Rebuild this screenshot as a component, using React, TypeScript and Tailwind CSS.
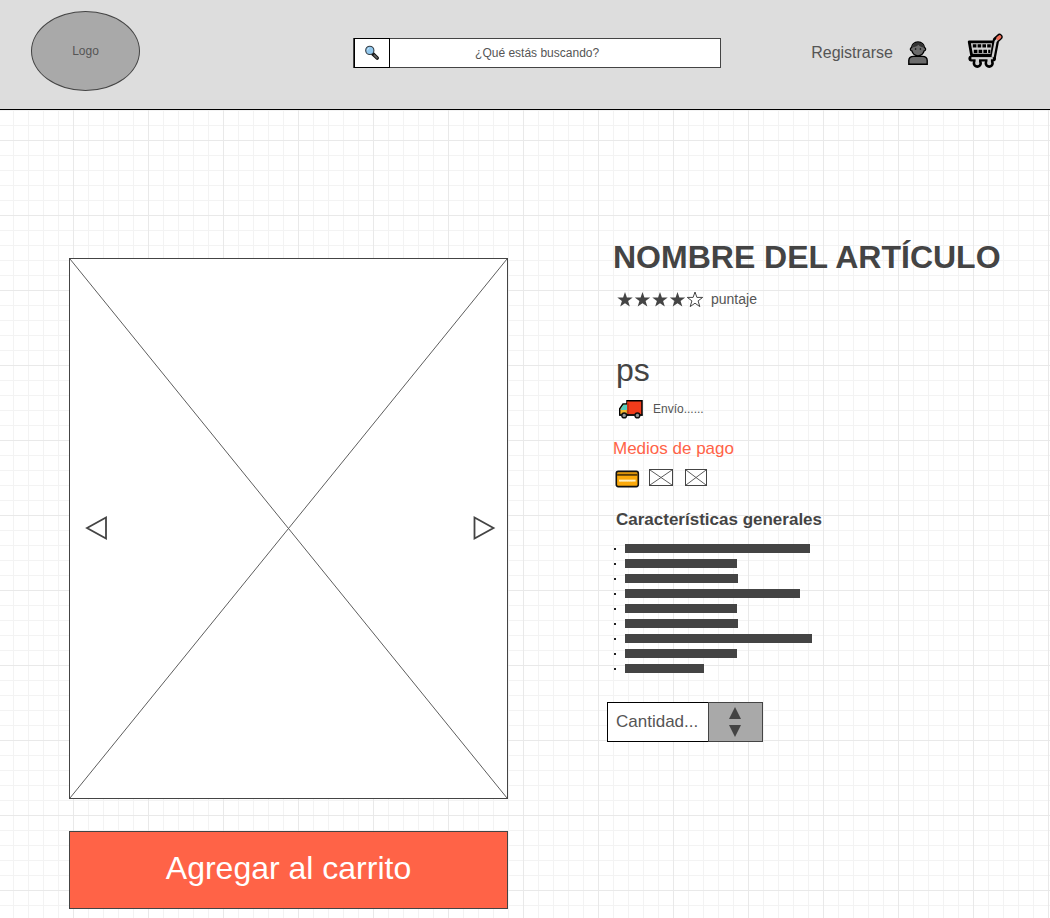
import React from "react";

const featureBars = [
  "w-[185px]",
  "w-[112px]",
  "w-[113px]",
  "w-[175px]",
  "w-[112px]",
  "w-[113px]",
  "w-[187px]",
  "w-[112px]",
  "w-[79px]",
];

function SearchIcon() {
  return (
    <svg viewBox="0 0 16 16" className="h-4 w-4" aria-hidden="true">
      <path d="M8.6 8.6 L13.2 13" stroke="#111" strokeWidth="3.6" strokeLinecap="round" />
      <path d="M10.2 10.2 L13 12.8" stroke="#666" strokeWidth="1.6" strokeLinecap="round" />
      <circle cx="5.8" cy="5.4" r="4.1" fill="#92c8ee" stroke="#333b42" strokeWidth="1.1" />
      <path d="M3.4 5.4 A2.6 2.6 0 0 1 5.4 3" fill="none" stroke="#c5e4fa" strokeWidth="1" />
    </svg>
  );
}

function UserIcon() {
  return (
    <svg viewBox="0 0 22 26" className="h-[26px] w-[22px]" aria-hidden="true">
      <path d="M1.8 24.2 V20.6 Q1.8 16.4 6.6 16.4 H15.4 Q20.2 16.4 20.2 20.6 V24.2 Z" fill="#6b6b6b" stroke="#000" strokeWidth="1.4" />
      <path d="M11 2 C7.2 2 4.6 4.5 4.6 7.6 C2.8 8 3 10.4 4.8 10.8 C5.8 14 8.3 15.8 11 15.8 C13.7 15.8 16.2 14 17.2 10.8 C19 10.4 19.2 8 17.4 7.6 C17.4 4.5 14.8 2 11 2 Z" fill="#6b6b6b" stroke="#000" strokeWidth="1.3" />
      <path d="M5.2 7.4 C5.2 4 8 2.4 11 2.4 C14 2.4 16.8 4 16.8 7.4 C14 7 12.4 6.2 11.4 4.8 C10 6.4 8.2 7.2 5.2 7.4 Z" fill="#333" />
      <circle cx="8.6" cy="9" r="0.8" />
      <circle cx="13.4" cy="9" r="0.8" />
    </svg>
  );
}

function CartIcon() {
  return (
    <svg viewBox="0 0 36 36" className="h-9 w-9" fill="none" aria-hidden="true">
      <path d="M25.8 24 L29 7.2 L32.4 4" stroke="#000" strokeWidth="6.4" strokeLinecap="round" strokeLinejoin="round" />
      <path d="M4.4 25.4 H26" stroke="#000" strokeWidth="6" strokeLinecap="round" />
      <circle cx="10.3" cy="30.2" r="3.4" fill="#d0d0d0" stroke="#000" strokeWidth="2.6" />
      <circle cx="22.2" cy="30.2" r="3.4" fill="#d0d0d0" stroke="#000" strokeWidth="2.6" />
      <path d="M2.2 8.8 H26.6 L24.8 22.2 H4.6 Z" fill="#d0d0d0" stroke="#000" strokeWidth="2.8" strokeLinejoin="round" />
      <path d="M5.8 12.9 H24 M6.8 18.3 H23.4" stroke="#000" strokeWidth="3.2" strokeDasharray="3.6 1.2" />
      <path d="M25.6 24 L28.6 8.4 L30.2 6.6" stroke="#d0d0d0" strokeWidth="2.2" />
      <path d="M4.4 25.2 H25.8" stroke="#d0d0d0" strokeWidth="2.2" />
      <path d="M8.6 26 H12 V30 H8.6 Z M20.5 26 H23.9 V30 H20.5 Z" fill="#d0d0d0" />
      <path d="M31 5.4 L32.6 4" stroke="#f0705b" strokeWidth="3.6" strokeLinecap="round" />
    </svg>
  );
}

function TruckIcon() {
  return (
    <svg viewBox="0 0 26 20" className="h-5 w-[26px]" aria-hidden="true">
      <path d="M9 1.7 H24 V16 H9 Z" fill="#f23c1b" stroke="#000" strokeWidth="1.5" />
      <path d="M9.6 5 H5 L1.7 9.8 V16 H9.6 Z" fill="#f5b92e" stroke="#000" strokeWidth="1.4" />
      <path d="M9.2 5.8 H5.5 L2.8 9.8 V11 H9.2 Z" fill="#55cbbd" />
      <path d="M9.8 2.6 V15" stroke="#f23c1b" strokeWidth="1.2" />
      <path d="M1.4 15.4 H24.6 V16.8 H1.4 Z" fill="#111" />
      <circle cx="6.2" cy="16.4" r="2.4" fill="#999" stroke="#111" strokeWidth="1.4" />
      <circle cx="19.4" cy="16.4" r="2.4" fill="#999" stroke="#111" strokeWidth="1.4" />
    </svg>
  );
}

function CardIcon() {
  return (
    <svg viewBox="0 0 26 18" className="h-[18px] w-[26px]" role="img" aria-label="Tarjeta">
      <rect x="2.3" y="1.4" width="22" height="15.2" rx="2" fill="#fba90a" stroke="#111" strokeWidth="1.6" />
      <path d="M3.1 4.8 H23.5" stroke="#5b3c05" strokeWidth="2" />
      <path d="M5 10.6 H21.6" stroke="#fff0c2" strokeWidth="1.9" />
      <path d="M6 11.4 H19" stroke="#f9d98d" strokeWidth="0.8" strokeDasharray="1.4 0.8" />
    </svg>
  );
}

function CrossLines() {
  return (
    <svg viewBox="0 0 100 100" preserveAspectRatio="none" className="block h-full w-full" aria-hidden="true">
      <path d="M0 0 L100 100 M100 0 L0 100" stroke="#5c5c5c" strokeWidth="1" vectorEffect="non-scaling-stroke" fill="none" />
    </svg>
  );
}

function Stars() {
  const star = "M8 0.4 L9.9 5.8 H15.7 L11.1 9.3 L12.8 15 L8 11.6 L3.2 15 L4.9 9.3 L0.3 5.8 H6.1 Z";
  return (
    <svg viewBox="0 0 88 16" className="h-4 w-[88px]" role="img" aria-label="4 de 5 estrellas">
      {[0, 17.5, 35, 52.5, 70].map((x, i) => (
        <path
          key={x}
          d={star}
          transform={`translate(${x} 0.6)`}
          fill={i < 4 ? "#444" : "#fff"}
          stroke="#444"
          strokeWidth={i < 4 ? 0 : 1}
        />
      ))}
    </svg>
  );
}

function Header() {
  return (
    <header className="grid h-[110px] grid-cols-[109px_213fr_368px_90fr_auto] border-b border-black bg-[#ddd] pr-[47px] pl-[31px]">
      <a
        href="#inicio"
        className="mt-[11px] flex h-20 items-center justify-center rounded-[50%] border border-[#444] bg-[#a9a9a9] text-[12px]"
      >
        Logo
      </a>
      <form role="search" className="col-start-3 mt-[38px] flex h-[30px] border border-[#444] bg-white">
        <button
          type="button"
          aria-label="Buscar"
          className="-my-px flex w-9 items-center justify-center border border-black"
        >
          <SearchIcon />
        </button>
        <input
          type="text"
          aria-label="Buscar productos"
          placeholder="¿Qué estás buscando?"
          className="min-w-0 flex-1 pr-9 text-center text-[12px] outline-none placeholder:text-[#555]"
        />
      </form>
      <nav className="col-start-5 mt-[33px] flex h-10 items-center">
        <a href="#registro" className="flex items-center gap-3.5 text-[16px]">
          Registrarse
          <UserIcon />
        </a>
        <a href="#carrito" aria-label="Carrito" className="ml-[38px] -mt-1">
          <CartIcon />
        </a>
      </nav>
    </header>
  );
}

function Gallery() {
  return (
    <section aria-label="Fotos del artículo" className="pt-5">
      <div className="relative aspect-[439/541] border border-[#444] bg-white">
        <CrossLines />
        <div className="absolute inset-0 flex items-center justify-between pr-2 pb-0.5 pl-3">
          <button type="button" aria-label="Anterior">
            <svg viewBox="0 0 28 28" className="h-7 w-7">
              <path d="M5 14 L24 3.5 V24.5 Z" fill="#fff" stroke="#444" strokeWidth="1.8" />
            </svg>
          </button>
          <button type="button" aria-label="Siguiente">
            <svg viewBox="0 0 28 28" className="h-7 w-7">
              <path d="M22.5 14 L3.5 3.5 V24.5 Z" fill="#fff" stroke="#444" strokeWidth="1.8" />
            </svg>
          </button>
        </div>
      </div>
      <button
        type="button"
        className="mt-8 flex h-[78px] w-full items-center justify-center border border-[#444] bg-[#ff6347] pb-1 text-[32px] text-white"
      >
        Agregar al carrito
      </button>
    </section>
  );
}

function Details() {
  return (
    <section className="-mt-px pl-1.5">
      <h1 className="text-[32px] leading-10 font-bold whitespace-nowrap text-[#444]">NOMBRE DEL ARTÍCULO</h1>
      <div className="mt-3 flex h-5 items-center gap-1.5 pl-1">
        <Stars />
        <span className="text-[14px] leading-5">puntaje</span>
      </div>
      <p className="mt-[41px] pl-[3px] text-[32px] leading-10 text-[#444]">ps</p>
      <div className="mt-[9px] flex h-5 items-center gap-[9px] pl-[5px]">
        <TruckIcon />
        <span className="text-[12px]">Envío......</span>
      </div>
      <h2 className="mt-[18px] text-[17px] leading-6 text-[#ff6347]">Medios de pago</h2>
      <div className="mt-2 flex h-5 items-start pl-px">
        <div className="pt-px">
          <CardIcon />
        </div>
        <div className="ml-[9px] h-[17px] w-6 border border-[#444] bg-white">
          <CrossLines />
        </div>
        <div className="ml-3 h-[17px] w-[22px] border border-[#444] bg-white">
          <CrossLines />
        </div>
      </div>
      <h2 className="mt-[19px] pl-[3px] text-[17px] leading-6 font-bold text-[#444]">Características generales</h2>
      <ul className="mt-3 flex flex-col gap-1.5">
        {featureBars.map((width, i) => (
          <li key={i} className="flex h-[9px] items-center gap-[9px] pl-px">
            <span className="h-0.5 w-0.5 bg-[#222]" />
            <span className={`h-full bg-[#444] ${width}`} />
          </li>
        ))}
      </ul>
      <div className="mt-[29px] -ml-1.5 flex h-10 w-[156px]">
        <input
          type="text"
          inputMode="numeric"
          aria-label="Cantidad"
          placeholder="Cantidad..."
          className="w-[101px] border border-r-0 border-black bg-white pl-2 text-[17px] outline-none placeholder:text-[#555]"
        />
        <div className="flex flex-1 flex-col items-center justify-center gap-1.5 border border-[#444] bg-[#a9a9a9] pr-0.5">
          <button type="button" aria-label="Aumentar">
            <svg viewBox="0 0 12 12" className="block h-3 w-3">
              <path d="M6 0 L12 12 H0 Z" fill="#444" />
            </svg>
          </button>
          <button type="button" aria-label="Disminuir">
            <svg viewBox="0 0 12 12" className="block h-3 w-3">
              <path d="M6 12 L12 0 H0 Z" fill="#444" />
            </svg>
          </button>
        </div>
      </div>
    </section>
  );
}

export default function App() {
  return (
    <div className="min-h-screen bg-white bg-[linear-gradient(to_right,#e9e9e9_1px,transparent_1px),linear-gradient(to_bottom,#e9e9e9_1px,transparent_1px),linear-gradient(to_right,#f3f3f3_1px,transparent_1px),linear-gradient(to_bottom,#f3f3f3_1px,transparent_1px)] bg-[size:75px_75px,75px_75px,15px_15px,15px_15px] bg-[position:73px_65px,73px_65px,13px_5px,13px_5px] font-['Liberation_Sans',Arial,sans-serif] text-[#555]">
      <Header />
      <main className="grid grid-cols-[439fr_402fr] gap-x-[99px] pt-32 pr-[41px] pb-[9px] pl-[69px]">
        <Gallery />
        <Details />
      </main>
    </div>
  );
}
